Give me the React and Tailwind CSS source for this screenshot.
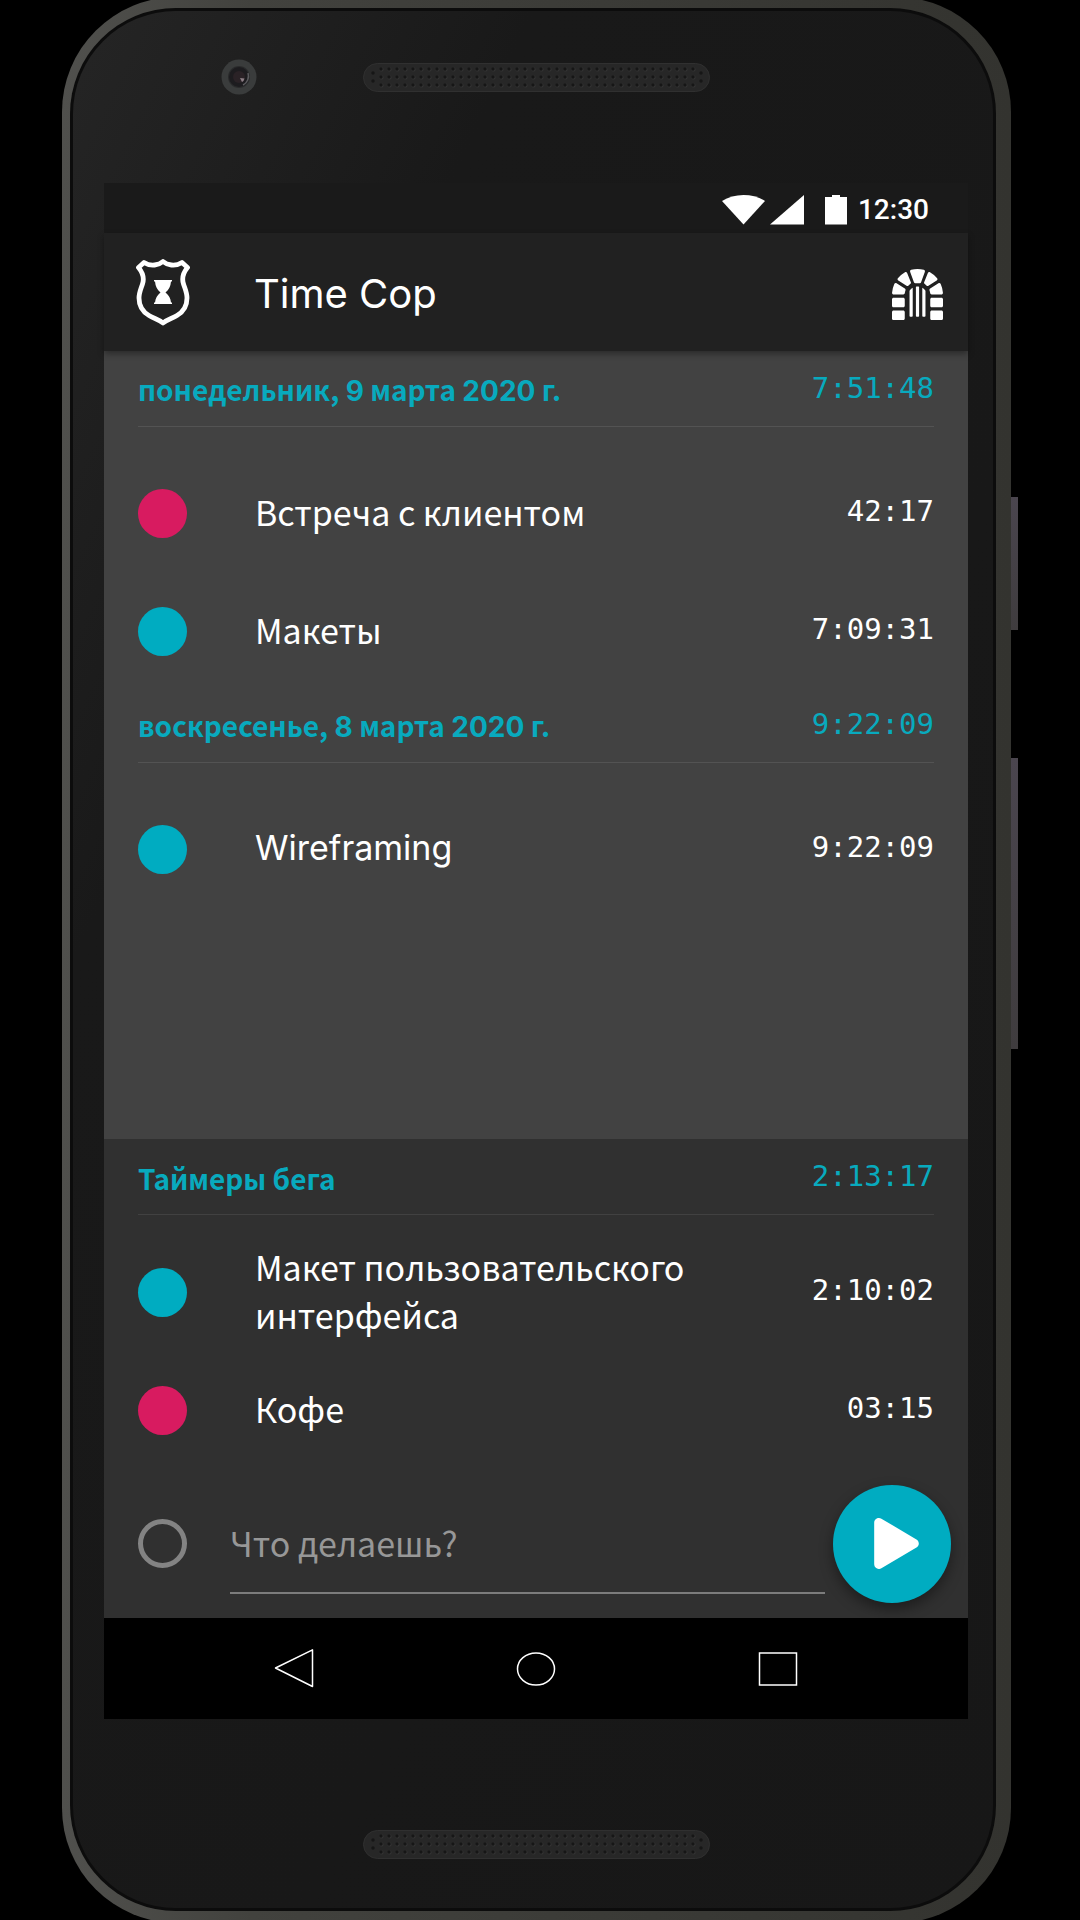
import React from "react";
import { FaDungeon, FaPlay } from "react-icons/fa";

const SANS = "font-['Noto_Sans_CJK_SC','Noto_Sans',sans-serif]";
const LATIN = "font-['Inter','Liberation_Sans',sans-serif]";
const MONO = "font-['DejaVu_Sans_Mono',monospace]";

const CYAN = "bg-[#00acc1]";
const PINK = "bg-[#d81b60]";

const days = [
  {
    title: ["понедельник, ", "9", " марта ", "2020", " г."],
    total: "7:51:48",
    entries: [
      { color: PINK, label: "Встреча с клиентом", time: "42:17" },
      { color: CYAN, label: "Макеты", time: "7:09:31" },
    ],
  },
  {
    title: ["воскресенье, ", "8", " марта ", "2020", " г."],
    total: "9:22:09",
    entries: [{ color: CYAN, label: "Wireframing", latin: true, time: "9:22:09" }],
  },
];

const running = [
  { color: CYAN, label: "Макет пользовательского интерфейса", time: "2:10:02" },
  { color: PINK, label: "Кофе", time: "03:15" },
];

function Speaker({ id }) {
  return (
    <svg className="h-[29px] w-[347px]" viewBox="0 0 347 29" aria-hidden="true">
      <defs>
        <pattern id={id} x="14" y="2" width="8" height="8" patternUnits="userSpaceOnUse">
          <circle cx="4.5" cy="4.5" r="2" fill="#343434" />
          <circle cx="4" cy="4" r="1.7" fill="#161616" />
        </pattern>
      </defs>
      <rect x="0.5" y="0.5" width="346" height="28" rx="14" fill="#272727" stroke="#303030" />
      <rect x="14" y="2" width="320" height="24" fill={`url(#${id})`} />
      <g fill="#161616">
        <circle cx="10" cy="10" r="1.7" />
        <circle cx="10" cy="18" r="1.7" />
        <circle cx="338" cy="10" r="1.7" />
        <circle cx="338" cy="18" r="1.7" />
      </g>
    </svg>
  );
}

function Camera() {
  return (
    <svg className="size-9" viewBox="0 0 36 36" aria-hidden="true">
      <circle cx="18" cy="18" r="17.5" fill="#3a3c3c" />
      <circle cx="18" cy="18" r="11" fill="#2a2b2c" />
      <circle cx="18" cy="18" r="10" fill="#1d1c1f" />
      <circle cx="18" cy="18" r="6" fill="#2a2226" />
      <path d="M19 19l4.500 .5a5 5 0 0 1-2.500 3.500z" fill="#8d7f86" />
      <path d="M27 14a10 10 0 0 1-5 12" fill="none" stroke="#5b5b5e" strokeWidth="1.500" />
    </svg>
  );
}

function Shield() {
  return (
    <svg className="h-[68px] w-[54px] shrink-0" viewBox="0 0 54 68" aria-hidden="true">
      <path
        d="M27 3.500C23 7 15 9 8 4.500L2.500 9.500C7 15 8.500 20 6.500 26C4.500 32 3 35 3 40C3 49 7 54 13 57.500C18 60.500 23 61.500 27 65C31 61.500 36 60.500 41 57.500C47 54 51 49 51 40C51 35 49.500 32 47.500 26C45.500 20 47 15 51.500 9.500L46 4.500C39 9 31 7 27 3.500Z"
        fill="none"
        stroke="#fff"
        strokeWidth="4.800"
        strokeLinejoin="round"
      />
      <path
        d="M18 22h18v1.500h-1C34.500 28.500 33 31.500 29.500 34.500C33 37.500 34.500 40 35 44.500h1V46H18v-1.500h1C19.500 40 21 37.500 24.500 34.500C21 31.500 19.500 28.500 19 23.500h-1z"
        fill="#fff"
      />
    </svg>
  );
}

function StatusBar() {
  return (
    <div className="flex h-[50px] shrink-0 items-center justify-end bg-[#1a1a1a] pt-1 pr-[39px]">
      <svg className="h-[30px] w-[126px]" viewBox="0 0 126 30" fill="#fff" aria-hidden="true">
        <path d="M0 6C12-2 31-2 43 6L21.500 29.500Z" />
        <path d="M82 0V29.500H48Z" />
        <path d="M103 2h7V0h8v2h7v27.500h-22z" />
      </svg>
      <span className="ml-[10px] font-['Roboto',sans-serif] text-[28px] leading-8 font-medium text-white">
        12:30
      </span>
    </div>
  );
}

function SectionHeader({ children, total, line }) {
  return (
    <div className="px-[34px]">
      <div className={`flex h-[73px] items-center justify-between border-b ${line}`}>
        <h2 className={`${SANS} text-[28px] leading-10 font-bold text-[#08aabe]`}>{children}</h2>
        <span className={`${MONO} pb-1 text-[29px] leading-8 text-[#08aabe]`}>{total}</span>
      </div>
    </div>
  );
}

function Entry({ color, label, latin, time }) {
  return (
    <li className="flex h-[118px] items-center px-[34px]">
      <span className={`size-[49px] shrink-0 rounded-full ${color}`} />
      <span
        className={`ml-[68px] flex-1 pb-0.5 text-[34px] leading-[48px] text-white ${latin ? LATIN : SANS}`}
      >
        {label}
      </span>
      <span className={`${MONO} pb-1 text-[29px] leading-8 text-white`}>{time}</span>
    </li>
  );
}

function NavBar() {
  return (
    <nav className="grid h-[101px] shrink-0 grid-cols-3 items-center bg-black px-[69px]">
      <button type="button" aria-label="Назад" className="flex justify-center">
        <svg className="h-10 w-10" viewBox="0 0 40 40" fill="none" stroke="#fff" strokeWidth="1.500" strokeLinejoin="round">
          <path d="M1.500 19L38.500 0.800V37.500Z" />
        </svg>
      </button>
      <button type="button" aria-label="Домой" className="flex justify-center">
        <svg className="h-[34px] w-10" viewBox="0 0 40 34" fill="none" stroke="#fff" strokeWidth="1.500">
          <ellipse cx="20" cy="17" rx="18.500" ry="16" />
        </svg>
      </button>
      <button type="button" aria-label="Обзор" className="flex justify-center">
        <svg className="h-[34px] w-10" viewBox="0 0 40 34" fill="none" stroke="#fff" strokeWidth="1.500">
          <rect x="1.500" y="1" width="37" height="32" />
        </svg>
      </button>
    </nav>
  );
}

function Screen() {
  return (
    <div className="mr-[25px] ml-[31px] flex flex-1 flex-col">
      <StatusBar />
      <header className="z-10 flex h-[118px] shrink-0 items-center bg-[#212121] pr-[25px] pl-8 shadow-[0_3px_6px_rgba(0,0,0,0.35)]">
        <Shield />
        <h1 className={`${LATIN} ml-16 flex-1 pt-1 text-[40px] leading-[48px] text-white`}>Time Cop</h1>
        <button type="button" aria-label="Меню" className="pt-1 text-white">
          <FaDungeon className="size-[51px]" />
        </button>
      </header>

      <main className="flex-1 bg-[#424242] pt-[3px]">
        {days.map((day) => (
          <section key={day.total}>
            <SectionHeader total={day.total} line="border-[#535353]">
              {day.title.map((part, i) => (
                <span key={i} className={i % 2 ? LATIN : ""}>
                  {part}
                </span>
              ))}
            </SectionHeader>
            <ul className="pt-[27px]">
              {day.entries.map((e) => (
                <Entry key={e.label} {...e} />
              ))}
            </ul>
          </section>
        ))}
      </main>

      <section className="shrink-0 bg-[#303030] pt-[3px]">
        <SectionHeader total="2:13:17" line="border-[#414141]">
          Таймеры бега
        </SectionHeader>
        <ul className="pt-[18px]">
          {running.map((e) => (
            <Entry key={e.label} {...e} />
          ))}
        </ul>
        <form className="flex h-[149px] items-center pr-[17px] pl-[34px]" onSubmit={(e) => e.preventDefault()}>
          <button
            type="button"
            aria-label="Проект"
            className="size-[49px] shrink-0 rounded-full border-[5px] border-[#838383]"
          />
          <input
            type="text"
            aria-label="Что делаешь?"
            placeholder="Что делаешь?"
            className={`${SANS} ml-[43px] h-[100px] min-w-0 flex-1 border-b-2 border-[#7c7c7c] bg-transparent text-[34px] text-white outline-none placeholder:text-[#979797]`}
          />
          <button
            type="submit"
            aria-label="Запустить"
            className="ml-2 flex size-[118px] shrink-0 items-center justify-center rounded-full bg-[#00acc1] pl-2 text-white shadow-[0_6px_14px_rgba(0,0,0,0.4)]"
          >
            <FaPlay className="h-[51px] w-[45px]" />
          </button>
        </form>
      </section>

      <NavBar />
    </div>
  );
}

export default function App() {
  return (
    <div className="flex min-h-screen justify-center overflow-hidden bg-black">
      <div className="relative -my-[3px] flex w-full max-w-[956px] pr-[7px]">
        <div className="absolute top-[500px] right-0 h-[133px] w-[9px] bg-linear-to-b from-[#4a454e] to-[#3f3c3e]" />
        <div className="absolute top-[761px] right-0 h-[291px] w-[9px] bg-linear-to-b from-[#4a454e] to-[#3f3c3e]" />
        <div className="relative flex flex-1 rounded-[115px] bg-linear-to-r from-[#50504d] via-[#42423e] via-20% to-[#33332f] pt-[11px] pr-[15px] pb-3 pl-2">
          <div className="flex flex-1 rounded-[106px] bg-[#0c0c0c] p-[3px]">
            <div className="flex flex-1 flex-col rounded-[103px] bg-linear-to-br from-[#252525] via-[#191919] via-25% to-[#171717]">
              <div className="mr-[25px] ml-[31px] grid h-[172px] grid-cols-[1fr_347px_1fr] items-center pb-10">
                <div className="flex justify-center pl-3">
                  <Camera />
                </div>
                <Speaker id="top-grille" />
              </div>
              <Screen />
              <div className="mr-[25px] ml-[31px] flex h-[189px] items-center justify-center pt-[62px]">
                <Speaker id="bottom-grille" />
              </div>
            </div>
          </div>
        </div>
      </div>
    </div>
  );
}
